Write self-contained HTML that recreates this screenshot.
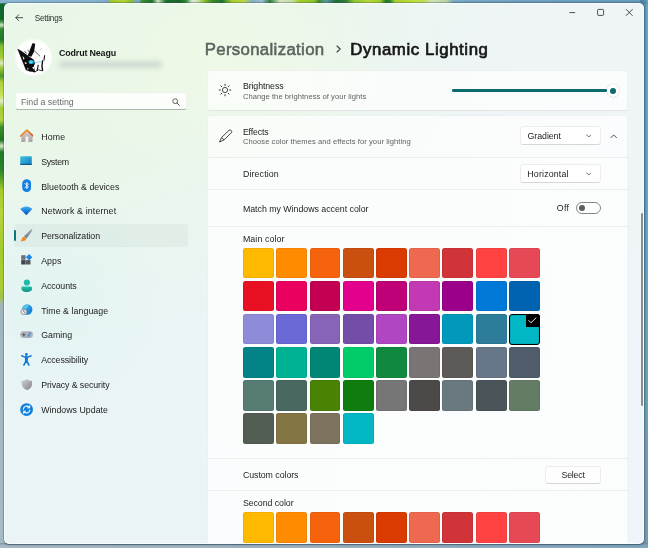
<!DOCTYPE html>
<html lang="en">
<head>
<meta charset="utf-8">
<title>Settings - Dynamic Lighting</title>
<style>
*{box-sizing:border-box;margin:0;padding:0}
html,body{width:648px;height:548px;overflow:hidden}
body{position:relative;font-family:"Liberation Sans",sans-serif;color:#1b1b1b;background:#9fb1bd}
.abs{position:absolute}
/* desktop behind window */
#desk-top{left:0;top:0;width:648px;height:6px;background:linear-gradient(90deg,#8cb6d2 0,#86b0cc 100px,#7fa9c6 108px,#9ccc22 111px,#b5d433 124px,#8cc425 131px,#7aa8c4 136px,#7ba9c4 139px,#3f8f2c 142px,#1d7129 152px,#d4e6c4 158px,#1d6d2a 166px,#15682a 180px,#2c8a2e 186px,#dbe9cf 192px,#cfe0b0 198px,#8cc42a 204px,#3c8d2a 212px,#1f7429 222px,#a6cf2a 232px,#b9d840 244px,#86b0c0 252px,#9bbfd0 262px,#2f7f3a 270px,#d8e6c0 280px,#c7dfa0 292px,#9fcf20 300px,#8cc522 314px,#3f8c2c 319px,#5f97a0 326px,#1f6e34 336px,#2d7f3a 346px,#8fc628 354px,#b6d934 368px,#a3cf2c 380px,#1f7a2a 386px,#2a8230 390px,#a8d22e 395px,#bfe03c 415px,#c4dc5c 424px,#cfe2b4 432px,#bdd6a4 446px,#86b2c4 452px,#7cadc8 460px,#74a6c2 520px,#6a9eba 648px)}
#desk-left{left:0;top:0;width:8px;height:548px;background:linear-gradient(180deg,#8ab4d0 0,#86b0cb 2.5px,#0f6a2a 4px,#0e692a 19px,#4f9a50 22px,#d0e4cc 25px,#2e8a2c 29px,#1f7a2a 40px,#7fbf2c 46px,#a2cf30 58px,#dbeacc 63px,#9ccc2f 68px,#4a9a2c 76px,#a9d136 82px,#c9e25a 96px,#e0eccc 101px,#9fcf2f 108px,#b3d440 120px,#3f8f2a 127px,#1c7624 140px,#d6e6c6 146px,#1f7a26 152px,#2a8428 170px,#6aac2c 182px,#a5cc2a 190px,#b4d63c 215px,#a2cb28 250px,#a9d030 285px,#9ec44a 298px,#a3b8b4 304px,#a0b6c0 312px,#a3b8c2 420px,#a6bcc5 548px)}
#desk-right{left:640px;top:0;width:8px;height:548px;background:linear-gradient(180deg,rgba(125,150,165,0) 0,rgba(125,150,165,0) 250px,rgba(125,150,165,.75) 548px),linear-gradient(90deg,#4e86a4 0,#4e86a4 4px,#5c95b3 5.5px,#6daccb 8px)}
#desk-bottom{left:0;top:543px;width:648px;height:5px;background:linear-gradient(180deg,rgba(90,110,130,.5) 0,rgba(90,110,130,.35) 1px,rgba(90,110,130,0) 2.6px),linear-gradient(90deg,#a6b9c4 0,#9db2c0 300px,#8aa9bd 520px,#7fa6bd 648px)}
#desk-tr{left:452px;top:0;width:196px;height:4px;background:linear-gradient(180deg,rgba(70,120,150,0) 0,rgba(70,120,150,.35) 3px)}
/* window */
#win{left:3.8px;top:2.8px;width:640px;height:540.8px;border-radius:5px;overflow:hidden;
 background:
 radial-gradient(ellipse 170px 110px at 215px 55px,rgba(241,249,230,.8) 0,rgba(241,249,230,0) 100%),
 radial-gradient(ellipse 130px 120px at 40px 300px,rgba(224,244,242,.8) 0,rgba(224,244,242,0) 100%),
 radial-gradient(ellipse 420px 330px at 60px 10px,#e8f7e7 0,rgba(232,247,231,.9) 40%,rgba(233,247,238,0) 100%),
 linear-gradient(90deg,rgba(240,245,248,0) 30%,rgba(240,245,248,.8) 100%),
 linear-gradient(180deg,#edf5f3 0,#ebf4f6 55%,#eaf4f7 100%);
 box-shadow:0 0 0 .5px rgba(50,75,95,.5),0 .6px 1.6px rgba(40,60,85,.55),inset 0 0 0 1px rgba(255,255,255,.7)}
.t{position:absolute;white-space:nowrap;line-height:1;transform-origin:0 50%}
.card{position:absolute;background:rgba(255,255,255,.68);border:.7px solid rgba(0,0,0,.045);border-bottom-color:rgba(0,0,0,.09);border-radius:3px}
.hr{position:absolute;left:207.5px;width:421px;height:.8px;background:rgba(0,0,0,.06)}
.sw{position:absolute;width:30.9px;height:30.6px;border-radius:2.5px;box-shadow:inset 0 0 0 .6px rgba(0,0,0,.1)}
.dd{position:absolute;left:520.4px;width:80.2px;height:19.1px;border-radius:3px;background:rgba(255,255,255,.92);border:.8px solid rgba(0,0,0,.07);border-bottom-color:rgba(0,0,0,.16)}
</style>
</head>
<body>
<div id="desk-top" class="abs"></div>
<div id="desk-left" class="abs"></div>
<div id="desk-right" class="abs"></div>
<div id="desk-bottom" class="abs"></div>
<div id="desk-tr" class="abs"></div>
<div id="win" class="abs"></div>

<!-- everything below is positioned in page coordinates -->
<div id="ui" class="abs" style="left:0;top:0;width:648px;height:548px;clip-path:inset(2.8px 4.2px 4.4px 3.8px round 5px);will-change:transform;filter:blur(.35px)">

<!-- title bar -->
<svg class="abs" style="left:14.5px;top:14px" width="8.3" height="7.4" viewBox="0 0 9 8"><path d="M8.3 4H1M4 .8 .9 4 4 7.2" fill="none" stroke="#2a2e2e" stroke-width=".9" stroke-linecap="round" stroke-linejoin="round"/></svg>
<svg class="abs" style="left:568px;top:8px" width="70" height="10" viewBox="0 0 70 10"><g fill="none" stroke="#222" stroke-width=".8"><path d="M1.4 4.6h5.8"/><rect x="29.6" y="1.4" width="6" height="6" rx="1"/><path d="M58 1.2l6.6 6.6M64.6 1.2L58 7.8"/></g></svg>

<!-- profile -->
<div class="abs" style="left:15.5px;top:39.5px;width:35.5px;height:35.5px;border-radius:50%;background:#fdfefd;box-shadow:0 0 2px 1px rgba(255,255,255,.7)"></div>
<svg class="abs" style="left:15.5px;top:39.5px" width="35.5" height="35.5" viewBox="60 45 380 390">
 <defs><filter id="b1"><feGaussianBlur stdDeviation="3.2"/></filter><filter id="b2"><feGaussianBlur stdDeviation="7"/></filter></defs>
 <g filter="url(#b1)">
 <path d="M183 218 236 80 266 86 254 172 224 228Z" fill="#0a0a0a"/>
 <path d="M70 141 104 158 250 262 264 300 252 332 266 402 232 394 204 392 163 374 120 268Z" fill="#0b0b0b"/>
 <path d="M258 166 320 224" stroke="#161616" stroke-width="7" fill="none"/>
 <path d="M322 150 338 138" stroke="#555" stroke-width="4" fill="none"/>
 <path d="M370 213 362 270" stroke="#111" stroke-width="12" fill="none"/>
 <path d="M348 268 340 330 348 384" stroke="#111" stroke-width="15" fill="none"/>
 <path d="M300 318 286 384" stroke="#111" stroke-width="12" fill="none"/>
 <path d="M262 396 300 372 346 384" stroke="#111" stroke-width="9" fill="none"/>
 <path d="M150 168 170 192" stroke="#111" stroke-width="9"/>
 <path d="M186 150 196 176" stroke="#222" stroke-width="6"/>
 <path d="M126 222 150 246 136 262Z M148 286 178 298 158 312Z M232 348 258 334 254 372Z M176 350 196 362 182 372Z" fill="#f4f6f6"/>
 </g>
 <ellipse cx="222" cy="288" rx="30" ry="22" fill="#1fc4f0" filter="url(#b2)"/>
 <ellipse cx="220" cy="288" rx="12" ry="9" fill="#7fe3fb" filter="url(#b1)"/>
 <path d="M252 300 338 278" stroke="#3ac2e0" stroke-width="6" filter="url(#b1)"/>
</svg>
<div class="abs" style="left:59px;top:60.5px;width:103px;height:7px;border-radius:3.5px;background:#c6d4cb;filter:blur(2.8px);opacity:.8"></div>

<!-- search -->
<div class="abs" style="left:14.6px;top:91.7px;width:172.2px;height:18.8px;border-radius:3px;background:rgba(255,255,255,.86);border:.7px solid rgba(0,0,0,.05);border-bottom:1px solid rgba(70,95,80,.45)"></div>
<svg class="abs" style="left:171.8px;top:97.6px" width="8" height="8" viewBox="0 0 8 8"><circle cx="3.2" cy="3.2" r="2.4" fill="none" stroke="#444" stroke-width=".8"/><path d="M5 5l2.4 2.4" stroke="#444" stroke-width=".9" stroke-linecap="round"/></svg>

<!-- nav -->
<div class="abs" style="left:13.6px;top:224.4px;width:174.8px;height:22.5px;border-radius:3.5px;background:rgba(30,60,60,.04)"></div>
<div class="abs" style="left:14.4px;top:230.4px;width:1.7px;height:10.6px;border-radius:1px;background:#0f7680"></div>
<!-- home -->
<svg class="abs" style="left:19.6px;top:129.4px" width="13.6" height="13.6" viewBox="0 0 13.6 13.6">
<defs><linearGradient id="gh" x1="0" y1="0" x2="1" y2="1"><stop offset="0" stop-color="#f2a61f"/><stop offset="1" stop-color="#d4502a"/></linearGradient>
<linearGradient id="gw" x1="0" y1="0" x2="0" y2="1"><stop offset="0" stop-color="#d9d0d0"/><stop offset="1" stop-color="#a9a3a5"/></linearGradient></defs>
<path d="M1.3 6.6 6.9 1.8 12.5 6.6V13H1.3Z" fill="url(#gw)"/>
<rect x="5.5" y="7.6" width="2.8" height="5.4" fill="#f3f3f3"/>
<path d="M.7 7 6.9 1.2 13.1 7" fill="none" stroke="url(#gh)" stroke-width="1.7" stroke-linecap="round" stroke-linejoin="round"/>
</svg>
<!-- system -->
<svg class="abs" style="left:20.4px;top:156.4px" width="12" height="9.2" viewBox="0 0 12 9.2">
<defs><linearGradient id="gs" x1="0" y1="0" x2="1" y2="1"><stop offset="0" stop-color="#3fc4e2"/><stop offset="1" stop-color="#187cc0"/></linearGradient></defs>
<rect x=".2" y=".2" width="11.6" height="8.8" rx=".9" fill="url(#gs)"/><rect x=".2" y="7.7" width="11.6" height="1.3" rx=".5" fill="#0c5c90"/>
</svg>
<!-- bluetooth -->
<svg class="abs" style="left:21.7px;top:179.2px" width="9.4" height="13.2" viewBox="0 0 9.4 13.2">
<rect x=".2" y=".2" width="9" height="12.8" rx="4.5" fill="#127fe8"/>
<path d="M2.9 4.4 6.4 8 4.7 9.8V3.4L6.4 5.2 2.9 8.8" fill="none" stroke="#fff" stroke-width=".85" stroke-linejoin="round" stroke-linecap="round"/>
</svg>
<!-- network -->
<svg class="abs" style="left:20px;top:206.2px" width="12.6" height="9.4" viewBox="0 0 12.6 9.4">
<defs><linearGradient id="gn" x1="0" y1="0" x2="0" y2="1"><stop offset="0" stop-color="#46aaf0"/><stop offset=".45" stop-color="#1f86e0"/><stop offset="1" stop-color="#0c4aa8"/></linearGradient></defs>
<path d="M.3 3C3.6-.4 9-.4 12.3 3L6.3 9.2Z" fill="url(#gn)"/>
</svg>
<!-- personalization brush -->
<svg class="abs" style="left:20.2px;top:229.2px" width="12.6" height="12.8" viewBox="0 0 12.6 12.8">
<defs><linearGradient id="gb" x1="1" y1="0" x2="0" y2="1"><stop offset="0" stop-color="#a9adba"/><stop offset="1" stop-color="#667a98"/></linearGradient></defs>
<path d="M10.9.5c.8-.6 1.800.3 1.300 1.200L6.800 9.600 3.900 7.300Z" fill="url(#gb)"/>
<path d="M4 7.4 6.4 9.6C6.2 12 3.4 12.6.5 12.2 1.8 11.3 1.5 8.2 4 7.4Z" fill="#f08a28"/>
</svg>
<!-- apps -->
<svg class="abs" style="left:21.2px;top:254.4px" width="11.4" height="10.8" viewBox="0 0 11.4 10.8">
<rect x=".2" y="1.2" width="4.4" height="4.6" fill="#6b707a"/><rect x=".2" y="6.1" width="4.4" height="4.4" fill="#3f4249"/><rect x="4.9" y="6.1" width="4.6" height="4.4" fill="#55595f"/>
<path d="M8.1.1 11.3 3.3 8.1 6.5 4.9 3.3Z" fill="#1a86ea"/>
</svg>
<!-- accounts -->
<svg class="abs" style="left:20.8px;top:278.6px" width="11.6" height="13.4" viewBox="0 0 11.6 13.4">
<defs><linearGradient id="ga" x1="0" y1="0" x2="0" y2="1"><stop offset="0" stop-color="#22c0ad"/><stop offset="1" stop-color="#13907f"/></linearGradient></defs>
<circle cx="5.9" cy="3.5" r="3.1" fill="#20bba8"/>
<path d="M1.8 7.6h8c.9 0 1.5.7 1.5 1.5 0 2.700-2.300 4-5.500 4s-5.500-1.300-5.500-4c0-.8.600-1.500 1.500-1.500Z" fill="url(#ga)"/>
</svg>
<!-- time & language -->
<svg class="abs" style="left:20.4px;top:304px" width="12.6" height="12.6" viewBox="0 0 12.6 12.6">
<defs><linearGradient id="gt" x1="0" y1="0" x2="1" y2="1"><stop offset="0" stop-color="#38b8ea"/><stop offset="1" stop-color="#1273cf"/></linearGradient></defs>
<circle cx="7.2" cy="5.5" r="5.2" fill="url(#gt)"/>
<path d="M3.200 3.400C4.600 1.300 7.200.6 9.400 1.400 8 2.200 6.800 3.600 6.600 5.200 5.400 4.600 4.200 4 3.200 3.400Z" fill="#6fd2f2" opacity=".75"/>
<circle cx="3.8" cy="7.800" r="2.900" fill="#e6e9ec" stroke="#8a929b" stroke-width=".9"/>
<path d="M3.800 6.300V7.900L4.900 8.500" fill="none" stroke="#555" stroke-width=".7" stroke-linecap="round"/>
</svg>
<!-- gaming -->
<svg class="abs" style="left:19.9px;top:330.9px" width="13.2" height="7.4" viewBox="0 0 13.2 7.4">
<rect x=".2" y=".3" width="12.800" height="6.800" rx="3.400" fill="#adb0b7"/>
<path d="M3.800 2.200V5.200M2.300 3.700H5.300" stroke="#4a4e56" stroke-width=".9"/>
<circle cx="9.900" cy="2.500" r=".9" fill="#1d7fe0"/><circle cx="8.700" cy="4.700" r=".9" fill="#1d7fe0"/>
</svg>
<!-- accessibility -->
<svg class="abs" style="left:21.1px;top:353.2px" width="10.8" height="12.6" viewBox="0 0 10.8 12.6">
<circle cx="5.400" cy="1.500" r="1.400" fill="#117ad6"/>
<path d="M.7 2.700 4 4.100H6.800L10.100 2.700" fill="none" stroke="#117ad6" stroke-width="1.500" stroke-linecap="round" stroke-linejoin="round"/>
<path d="M5.400 3.800V7.500M3 11.900 5.400 7.300 7.800 11.900" fill="none" stroke="#117ad6" stroke-width="1.700" stroke-linecap="round" stroke-linejoin="round"/>
<rect x="3.900" y="3.600" width="3" height="4.200" fill="#117ad6"/>
</svg>
<!-- privacy -->
<svg class="abs" style="left:20.5px;top:378.9px" width="11.8" height="11.6" viewBox="0 0 11.8 11.6">
<defs><linearGradient id="gp" x1="0" y1="0" x2="1" y2="1"><stop offset="0" stop-color="#d2d3d4"/><stop offset="1" stop-color="#7f8183"/></linearGradient></defs>
<path d="M5.900.3C7.500 1.500 9.400 2 11.500 2c0 4.800-1.700 7.700-5.600 9.200C2 9.700.3 6.800.3 2 2.400 2 4.300 1.500 5.900.3Z" fill="url(#gp)"/>
</svg>
<!-- windows update -->
<svg class="abs" style="left:19.8px;top:402.7px" width="13.2" height="13.2" viewBox="0 0 13.2 13.2">
<circle cx="6.600" cy="6.600" r="6.400" fill="#1180da"/>
<path d="M3.300 6.200A3.400 3.400 0 0 1 9.300 4.400M9.900 7A3.400 3.400 0 0 1 3.900 8.800" fill="none" stroke="#fff" stroke-width="1.100" stroke-linecap="round"/>
<path d="M9.700 2.900V4.900H7.700M3.500 10.300V8.300H5.500" fill="none" stroke="#fff" stroke-width="1" stroke-linecap="round" stroke-linejoin="round"/>
</svg>


<!-- header chevron -->
<svg class="abs" style="left:335.6px;top:45.3px" width="6" height="8" viewBox="0 0 6 8"><path d="M1 1 4.200 4 1 7" fill="none" stroke="#3c4040" stroke-width="1.150" stroke-linecap="round" stroke-linejoin="round"/></svg>

<!-- cards -->
<div class="card" style="left:207.3px;top:70px;width:421.2px;height:40.8px"></div>
<div class="card" style="left:207.3px;top:114.8px;width:421.2px;height:440px;border-radius:3px 3px 0 0"></div>
<div class="abs" style="left:207.8px;top:157.6px;width:420.2px;height:386px;background:rgba(255,255,255,.28)"></div>
<div class="hr" style="top:157.2px"></div>
<div class="hr" style="top:188.8px"></div>
<div class="hr" style="top:225.6px"></div>
<div class="hr" style="top:457.8px"></div>
<div class="hr" style="top:489.8px"></div>

<!-- brightness -->
<svg class="abs" style="left:217.5px;top:83.2px" width="14" height="14" viewBox="-7 -7 14 14"><circle r="2.6" fill="none" stroke="#222" stroke-width=".8"/><g stroke="#222" stroke-width=".9" stroke-linecap="round"><path d="M0-4.6V-5.8M0 4.6V5.8M-4.6 0H-5.8M4.6 0H5.8M3.25 3.25 4.1 4.1M-3.25 3.25-4.1 4.1M3.25-3.25 4.1-4.1M-3.25-3.25-4.1-4.1"/></g></svg>
<div class="abs" style="left:452px;top:89.3px;width:155px;height:2.4px;border-radius:1.2px;background:#0d6b70"></div>
<div class="abs" style="left:606.6px;top:84.4px;width:12.8px;height:12.8px;border-radius:50%;background:#fdfefe;box-shadow:0 0 0 .6px rgba(0,0,0,.07),0 .6px 1.2px rgba(0,0,0,.1)"></div>
<div class="abs" style="left:609.8px;top:87.6px;width:6.4px;height:6.4px;border-radius:50%;background:#0d6b70"></div>

<!-- effects -->
<svg class="abs" style="left:217.5px;top:128.6px" width="15" height="14" viewBox="0 0 15 14"><path d="M10.9 1.4A1.7 1.7 0 0 1 13.3 3.8L6 10.9 1.500 13 3.600 8.500ZM3.600 8.500 6 10.900" fill="none" stroke="#222" stroke-width=".85" stroke-linejoin="round"/></svg>
<div class="dd" style="top:126.3px"></div>
<svg class="abs" style="left:585.9px;top:134.3px" width="5.6" height="4" viewBox="0 0 7 5"><path d="M.8 1 3.5 3.8 6.2 1" fill="none" stroke="#444" stroke-width=".95" stroke-linecap="round" stroke-linejoin="round"/></svg>
<svg class="abs" style="left:609.9px;top:133.6px" width="7.4" height="4.6" viewBox="0 0 8 5"><path d="M.8 4.2 4 1 7.2 4.2" fill="none" stroke="#222" stroke-width=".85" stroke-linecap="round" stroke-linejoin="round"/></svg>

<!-- direction -->
<div class="dd" style="top:163.9px"></div>
<svg class="abs" style="left:585.9px;top:171.9px" width="5.6" height="4" viewBox="0 0 7 5"><path d="M.8 1 3.5 3.8 6.2 1" fill="none" stroke="#444" stroke-width=".95" stroke-linecap="round" stroke-linejoin="round"/></svg>

<!-- toggle -->
<div class="abs" style="left:576px;top:201.7px;width:25px;height:12.2px;border-radius:6.1px;border:.8px solid #828686;background:rgba(255,255,255,.55)"></div>
<div class="abs" style="left:578.9px;top:204.8px;width:6.6px;height:6.6px;border-radius:50%;background:#5a5d5d"></div>

<!-- select button -->
<div class="abs" style="left:545.4px;top:465.6px;width:55.2px;height:18.6px;border-radius:3px;background:#fefefe;border:.8px solid rgba(0,0,0,.07);border-bottom-color:rgba(0,0,0,.16)"></div>

<!-- swatches -->
<div class="sw" style="left:243.15px;top:247.70px;background:#FFB900"></div>
<div class="sw" style="left:276.37px;top:247.70px;background:#FF8C00"></div>
<div class="sw" style="left:309.59px;top:247.70px;background:#F7630C"></div>
<div class="sw" style="left:342.81px;top:247.70px;background:#CA5010"></div>
<div class="sw" style="left:376.03px;top:247.70px;background:#DA3B01"></div>
<div class="sw" style="left:409.25px;top:247.70px;background:#EF6950"></div>
<div class="sw" style="left:442.47px;top:247.70px;background:#D13438"></div>
<div class="sw" style="left:475.69px;top:247.70px;background:#FF4343"></div>
<div class="sw" style="left:508.91px;top:247.70px;background:#E74856"></div>
<div class="sw" style="left:243.15px;top:280.80px;background:#E81123"></div>
<div class="sw" style="left:276.37px;top:280.80px;background:#EA005E"></div>
<div class="sw" style="left:309.59px;top:280.80px;background:#C30052"></div>
<div class="sw" style="left:342.81px;top:280.80px;background:#E3008C"></div>
<div class="sw" style="left:376.03px;top:280.80px;background:#BF0077"></div>
<div class="sw" style="left:409.25px;top:280.80px;background:#C239B3"></div>
<div class="sw" style="left:442.47px;top:280.80px;background:#9A0089"></div>
<div class="sw" style="left:475.69px;top:280.80px;background:#0078D7"></div>
<div class="sw" style="left:508.91px;top:280.80px;background:#0063B1"></div>
<div class="sw" style="left:243.15px;top:313.90px;background:#8E8CD8"></div>
<div class="sw" style="left:276.37px;top:313.90px;background:#6B69D6"></div>
<div class="sw" style="left:309.59px;top:313.90px;background:#8764B8"></div>
<div class="sw" style="left:342.81px;top:313.90px;background:#744DA9"></div>
<div class="sw" style="left:376.03px;top:313.90px;background:#B146C2"></div>
<div class="sw" style="left:409.25px;top:313.90px;background:#881798"></div>
<div class="sw" style="left:442.47px;top:313.90px;background:#0099BC"></div>
<div class="sw" style="left:475.69px;top:313.90px;background:#2D7D9A"></div>
<div class="sw" style="left:508.91px;top:313.60px;width:31px;height:31.2px;background:#00B7C3;border:1.3px solid #000;border-radius:3px"></div>
<div class="abs" style="left:526.11px;top:313.60px;width:13.8px;height:13.9px;background:#000;border-radius:0 3px 0 0"></div>
<svg class="abs" style="left:528.31px;top:316.90px" width="9" height="7" viewBox="0 0 9 7"><path d="M.8 3.6 3 5.8 8 .9" fill="none" stroke="#fff" stroke-width=".9" stroke-linecap="round" stroke-linejoin="round"/></svg>
<div class="sw" style="left:243.15px;top:347.00px;background:#038387"></div>
<div class="sw" style="left:276.37px;top:347.00px;background:#00B294"></div>
<div class="sw" style="left:309.59px;top:347.00px;background:#018574"></div>
<div class="sw" style="left:342.81px;top:347.00px;background:#00CC6A"></div>
<div class="sw" style="left:376.03px;top:347.00px;background:#10893E"></div>
<div class="sw" style="left:409.25px;top:347.00px;background:#7A7574"></div>
<div class="sw" style="left:442.47px;top:347.00px;background:#5D5A58"></div>
<div class="sw" style="left:475.69px;top:347.00px;background:#68768A"></div>
<div class="sw" style="left:508.91px;top:347.00px;background:#515C6B"></div>
<div class="sw" style="left:243.15px;top:380.10px;background:#567C73"></div>
<div class="sw" style="left:276.37px;top:380.10px;background:#486860"></div>
<div class="sw" style="left:309.59px;top:380.10px;background:#498205"></div>
<div class="sw" style="left:342.81px;top:380.10px;background:#107C10"></div>
<div class="sw" style="left:376.03px;top:380.10px;background:#767676"></div>
<div class="sw" style="left:409.25px;top:380.10px;background:#4C4A48"></div>
<div class="sw" style="left:442.47px;top:380.10px;background:#69797E"></div>
<div class="sw" style="left:475.69px;top:380.10px;background:#4A5459"></div>
<div class="sw" style="left:508.91px;top:380.10px;background:#647C64"></div>
<div class="sw" style="left:243.15px;top:413.20px;background:#525E54"></div>
<div class="sw" style="left:276.37px;top:413.20px;background:#847545"></div>
<div class="sw" style="left:309.59px;top:413.20px;background:#7E735F"></div>
<div class="sw" style="left:342.81px;top:413.20px;background:#00B7C3"></div>
<div class="sw" style="left:243.15px;top:512.20px;background:#FFB900"></div>
<div class="sw" style="left:276.37px;top:512.20px;background:#FF8C00"></div>
<div class="sw" style="left:309.59px;top:512.20px;background:#F7630C"></div>
<div class="sw" style="left:342.81px;top:512.20px;background:#CA5010"></div>
<div class="sw" style="left:376.03px;top:512.20px;background:#DA3B01"></div>
<div class="sw" style="left:409.25px;top:512.20px;background:#EF6950"></div>
<div class="sw" style="left:442.47px;top:512.20px;background:#D13438"></div>
<div class="sw" style="left:475.69px;top:512.20px;background:#FF4343"></div>
<div class="sw" style="left:508.91px;top:512.20px;background:#E74856"></div>

<!-- scrollbar -->
<div class="abs" style="left:640.9px;top:212.8px;width:1.8px;height:193px;border-radius:1px;background:#8a8e90"></div>

<!-- texts -->
<div class="t" style="left:34.80px;top:15px;font-size:8.2px;letter-spacing:-0.264px;color:#2c3030">Settings</div>
<div class="t" style="left:59.00px;top:49px;font-size:8.9px;letter-spacing:-0.145px;color:#161616;font-weight:bold">Codrut Neagu</div>
<div class="t" style="left:20.95px;top:98px;font-size:8.8px;letter-spacing:0.000px;color:#676b6b">Find a setting</div>
<div class="t" style="left:41.20px;top:133px;font-size:8.8px;letter-spacing:0.200px;color:#1c1c1c">Home</div>
<div class="t" style="left:41.20px;top:158px;font-size:8.8px;letter-spacing:-0.290px;color:#1c1c1c">System</div>
<div class="t" style="left:41.20px;top:183px;font-size:8.8px;letter-spacing:0.022px;color:#1c1c1c">Bluetooth &amp; devices</div>
<div class="t" style="left:41.20px;top:207px;font-size:8.8px;letter-spacing:0.150px;color:#1c1c1c">Network &amp; internet</div>
<div class="t" style="left:41.20px;top:232px;font-size:8.8px;letter-spacing:-0.093px;color:#1c1c1c">Personalization</div>
<div class="t" style="left:41.20px;top:257px;font-size:8.8px;letter-spacing:0.050px;color:#1c1c1c">Apps</div>
<div class="t" style="left:41.20px;top:282px;font-size:8.8px;letter-spacing:-0.100px;color:#1c1c1c">Accounts</div>
<div class="t" style="left:41.20px;top:307px;font-size:8.8px;letter-spacing:0.054px;color:#1c1c1c">Time &amp; language</div>
<div class="t" style="left:41.20px;top:331px;font-size:8.8px;letter-spacing:0.030px;color:#1c1c1c">Gaming</div>
<div class="t" style="left:41.20px;top:356px;font-size:8.8px;letter-spacing:-0.079px;color:#1c1c1c">Accessibility</div>
<div class="t" style="left:41.20px;top:381px;font-size:8.8px;letter-spacing:-0.091px;color:#1c1c1c">Privacy &amp; security</div>
<div class="t" style="left:41.20px;top:406px;font-size:8.8px;letter-spacing:0.019px;color:#1c1c1c">Windows Update</div>
<div class="t" style="left:204.70px;top:42px;font-size:16.8px;letter-spacing:0.336px;color:#59645e;-webkit-text-stroke:0.55px #59645e">Personalization</div>
<div class="t" style="left:350.30px;top:42px;font-size:16.8px;letter-spacing:0.593px;color:#171717;-webkit-text-stroke:0.7px #171717">Dynamic Lighting</div>
<div class="t" style="left:242.90px;top:82px;font-size:8.8px;letter-spacing:-0.094px;color:#1c1c1c">Brightness</div>
<div class="t" style="left:242.90px;top:93px;font-size:7.6px;letter-spacing:0.050px;color:#5e6262">Change the brightness of your lights</div>
<div class="t" style="left:242.90px;top:128px;font-size:8.8px;letter-spacing:-0.167px;color:#1c1c1c">Effects</div>
<div class="t" style="left:242.90px;top:138px;font-size:7.6px;letter-spacing:0.060px;color:#5e6262">Choose color themes and effects for your lighting</div>
<div class="t" style="left:242.90px;top:170px;font-size:8.8px;letter-spacing:0.144px;color:#1c1c1c">Direction</div>
<div class="t" style="left:242.90px;top:205px;font-size:8.8px;letter-spacing:-0.018px;color:#1c1c1c">Match my Windows accent color</div>
<div class="t" style="left:242.90px;top:235px;font-size:8.8px;letter-spacing:0.111px;color:#1c1c1c">Main color</div>
<div class="t" style="left:242.90px;top:471px;font-size:8.8px;letter-spacing:-0.050px;color:#1c1c1c">Custom colors</div>
<div class="t" style="left:242.90px;top:499px;font-size:8.8px;letter-spacing:-0.059px;color:#1c1c1c">Second color</div>
<div class="t" style="left:527.60px;top:132px;font-size:8.8px;letter-spacing:-0.064px;color:#1c1c1c">Gradient</div>
<div class="t" style="left:527.35px;top:170px;font-size:8.8px;letter-spacing:0.172px;color:#1c1c1c">Horizontal</div>
<div class="t" style="left:556.80px;top:204px;font-size:8.8px;letter-spacing:0.250px;color:#1c1c1c">Off</div>
<div class="t" style="left:561.60px;top:471px;font-size:8.8px;letter-spacing:-0.240px;color:#1c1c1c">Select</div>

</div>
</body>
</html>
